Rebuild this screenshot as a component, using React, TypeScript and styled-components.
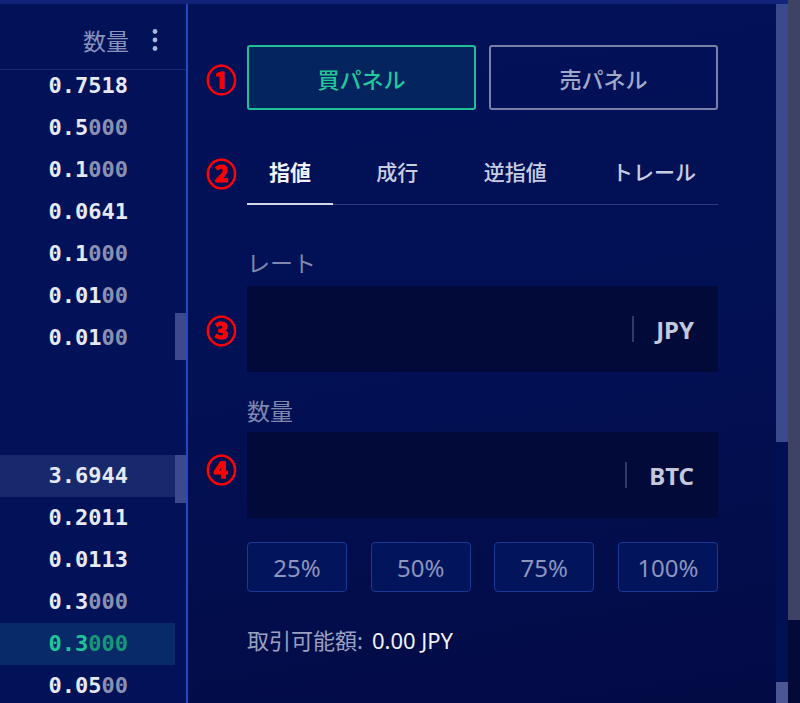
import React from 'react'
import styled, { createGlobalStyle } from 'styled-components';

const jp = `"Noto Sans", "Noto Sans CJK JP", sans-serif`;
const mono = `"DejaVu Sans Mono", "Liberation Mono", monospace`;

type Qty = {
    main : string,
    dim : string,
    tone? : 'plain' | 'hl' | 'green'
}

const asks : Qty[] = [
    { main: '0.7518', dim: '' },
    { main: '0.5', dim: '000' },
    { main: '0.1', dim: '000' },
    { main: '0.0641', dim: '' },
    { main: '0.1', dim: '000' },
    { main: '0.01', dim: '00' },
    { main: '0.01', dim: '00' },
]

const bids : Qty[] = [
    { main: '3.6944', dim: '', tone: 'hl' },
    { main: '0.2011', dim: '' },
    { main: '0.0113', dim: '' },
    { main: '0.3', dim: '000' },
    { main: '0.3', dim: '000', tone: 'green' },
    { main: '0.05', dim: '00' },
]

const GlobalStyle = createGlobalStyle`
    html, body {
        margin : 0;
        padding : 0;
        background : #011052;
        overflow : hidden;
    }
    #root {
        width : 800px;
        height : 703px;
    }
`

const Page = styled.div`
    width : 800px;
    height : 703px;
    display : flex;
    flex-direction : row;
    overflow : hidden;
`

const Body = styled.div`
    flex : 1;
    display : flex;
    flex-direction : column;
    min-width : 0;
`

const TopBar = styled.div`
    height : 4px;
    flex-shrink : 0;
    background : #12237a;
`

const Main = styled.div`
    flex : 1;
    display : flex;
    flex-direction : row;
    min-height : 0;
`

const BookColumn = styled.div`
    width : 186px;
    flex-shrink : 0;
    border-right : 2px solid #2746c2;
    background : #011259;
    display : flex;
    flex-direction : column;
    overflow : hidden;
`

const BookHeader = styled.div`
    height : 59px;
    padding : 6px 28px 0 0;
    border-bottom : 1px solid #1a2a78;
    display : flex;
    flex-direction : row;
    align-items : center;
    justify-content : flex-end;
    gap : 23px;
    flex-shrink : 0;
`

const HeaderLabel = styled.div`
    font-family : ${jp};
    font-size : 23px;
    color : #8a93bc;
`

const Section = styled.div<{ $height? : number }>`
    display : flex;
    flex-direction : row;
    flex-shrink : 0;
    height : ${p => p.$height ? `${p.$height}px` : 'auto'};
    overflow : hidden;
`

const Spread = styled.div`
    height : 91px;
    flex-shrink : 0;
`

const RowList = styled.div`
    width : 175px;
    display : flex;
    flex-direction : column;
`

const Row = styled.div<{ $top? : boolean, $tone : string }>`
    height : 42px;
    flex-shrink : 0;
    box-sizing : border-box;
    display : flex;
    flex-direction : row;
    justify-content : flex-end;
    align-items : ${p => p.$top ? 'flex-start' : 'center'};
    padding : ${p => p.$top ? '5px 47px 0 0' : '0 47px 0 0'};
    font-family : ${mono};
    font-size : 22px;
    font-weight : bold;
    line-height : 22px;
    background : ${p => p.$tone === 'hl' ? '#17286c' : p.$tone === 'green' ? '#082a68' : 'transparent'};
    color : ${p => p.$tone === 'green' ? '#1ec698' : '#e6e9f3'};

    & > span {
        color : ${p => p.$tone === 'green' ? '#17977a' : '#8a90b2'};
    }
`

const ScrollTrack = styled.div`
    width : 11px;
    display : flex;
    flex-direction : column;
`

const Thumb = styled.div<{ $offset : number, $size : number }>`
    margin-top : ${p => p.$offset}px;
    height : ${p => p.$size}px;
    background : #3c4a8c;
`

const OrderPanel = styled.div`
    flex : 1;
    display : flex;
    flex-direction : column;
    background : linear-gradient(170deg, #021259 0%, #021054 50%, #030b45 100%);
`

const Line = styled.div<{ $gap : number }>`
    display : flex;
    flex-direction : row;
    align-items : center;
    margin-top : ${p => p.$gap}px;
`

const Marker = styled.div<{ $lift? : number }>`
    width : 52px;
    padding-left : 7px;
    margin-bottom : ${p => p.$lift ?? 0}px;
    text-align : center;
    font-family : "Noto Sans CJK JP", sans-serif;
    font-size : 30px;
    font-weight : bold;
    line-height : 30px;
    color : #ff0000;
    -webkit-text-stroke : 1.1px #ff0000;
`

const Content = styled.div`
    width : 471px;
`

const PanelSwitch = styled.div`
    display : grid;
    grid-template-columns : 1fr 1fr;
    gap : 13px;
`

const PanelButton = styled.div<{ $active? : boolean }>`
    height : 65px;
    box-sizing : border-box;
    border-radius : 3px;
    border : 2px solid ${p => p.$active ? '#1fc096' : '#7880a8'};
    background : ${p => p.$active ? '#03245f' : 'transparent'};
    color : ${p => p.$active ? '#21c899' : '#a2a9c8'};
    font-family : ${jp};
    font-size : 22px;
    font-weight : 500;
    display : flex;
    align-items : center;
    justify-content : center;
`

const Tabs = styled.div`
    display : flex;
    flex-direction : row;
    justify-content : space-between;
    border-bottom : 1px solid #2d3b7e;
`

const Tab = styled.div<{ $active? : boolean }>`
    height : 65px;
    padding : 0 22px;
    margin-bottom : -1px;
    display : flex;
    align-items : center;
    border-bottom : 2px solid ${p => p.$active ? '#d3d7e8' : 'transparent'};
    font-family : ${jp};
    font-size : 21px;
    font-weight : ${p => p.$active ? 700 : 500};
    color : ${p => p.$active ? '#f2f4fb' : '#c9cde2'};
`

const FieldLabel = styled.div`
    font-family : ${jp};
    font-size : 23px;
    line-height : 28px;
    color : #7e88ae;
`

const Field = styled.div`
    height : 86px;
    background : #020a39;
    display : flex;
    flex-direction : row;
    align-items : center;
    justify-content : flex-end;
    padding-right : 24px;
`

const FieldSep = styled.div`
    width : 2px;
    height : 26px;
    background : #323a6c;
    margin-right : 22px;
`

const Unit = styled.div`
    font-family : ${jp};
    font-size : 24px;
    font-weight : bold;
    color : #c3c8dd;
`

const Percents = styled.div`
    display : flex;
    flex-direction : row;
    justify-content : space-between;
`

const PctButton = styled.div`
    width : 100px;
    height : 50px;
    box-sizing : border-box;
    border : 1.5px solid #1a3894;
    border-radius : 4px;
    background : #02145c;
    display : flex;
    align-items : center;
    justify-content : center;
    font-family : ${jp};
    font-size : 24px;
    color : #8c95bd;
`

const Available = styled.div`
    font-family : ${jp};
    font-size : 22px;
    line-height : 28px;
    color : #9aa1c0;

    & > b {
        font-weight : normal;
        color : #f1f3fb;
        margin-left : 9px;
    }
`

const PanelScroll = styled.div`
    width : 12px;
    display : flex;
    flex-direction : column;
    justify-content : space-between;
`

const PanelThumb = styled.div<{ $size : number, $light? : boolean }>`
    height : ${p => p.$size}px;
    background : ${p => p.$light ? '#4b5792' : '#3b4a8c'};
`

const OuterScroll = styled.div`
    width : 12px;
    flex-shrink : 0;
    display : flex;
    flex-direction : column;
    background : #030a37;
`

const OuterThumb = styled.div`
    height : 620px;
    background : #3e4366;
`

function Kebab() {
    return (
        <svg width="6" height="22" viewBox="0 0 6 22">
            <circle cx="3" cy="2.5" r="2.4" fill="#a9b5da" />
            <circle cx="3" cy="11" r="2.4" fill="#a9b5da" />
            <circle cx="3" cy="19.5" r="2.4" fill="#a9b5da" />
        </svg>
    )
}

function QtyRow({ q, top } : { q : Qty, top? : boolean }) {
    return (
        <Row $top={top} $tone={q.tone ?? 'plain'}>
            {q.main}{q.dim && <span>{q.dim}</span>}
        </Row>
    )
}

export default function App() {
    return (
        <Page>
            <GlobalStyle />
            <Body>
                <TopBar />
                <Main>
                    <BookColumn>
                        <BookHeader>
                            <HeaderLabel>数量</HeaderLabel>
                            <Kebab />
                        </BookHeader>
                        <Section $height={294}>
                            <RowList>
                                {asks.map((q, i) => <QtyRow key={i} q={q} top />)}
                            </RowList>
                            <ScrollTrack>
                                <Thumb $offset={243} $size={47} />
                            </ScrollTrack>
                        </Section>
                        <Spread />
                        <Section>
                            <RowList>
                                {bids.map((q, i) => <QtyRow key={i} q={q} />)}
                            </RowList>
                            <ScrollTrack>
                                <Thumb $offset={0} $size={48} />
                            </ScrollTrack>
                        </Section>
                    </BookColumn>

                    <OrderPanel>
                        <Line $gap={41}>
                            <Marker>①</Marker>
                            <Content>
                                <PanelSwitch>
                                    <PanelButton $active>買パネル</PanelButton>
                                    <PanelButton>売パネル</PanelButton>
                                </PanelSwitch>
                            </Content>
                        </Line>
                        <Line $gap={28}>
                            <Marker>②</Marker>
                            <Content>
                                <Tabs>
                                    <Tab $active>指値</Tab>
                                    <Tab>成行</Tab>
                                    <Tab>逆指値</Tab>
                                    <Tab>トレール</Tab>
                                </Tabs>
                            </Content>
                        </Line>
                        <Line $gap={44}>
                            <Marker />
                            <Content>
                                <FieldLabel>レート</FieldLabel>
                            </Content>
                        </Line>
                        <Line $gap={9}>
                            <Marker>③</Marker>
                            <Content>
                                <Field>
                                    <FieldSep />
                                    <Unit>JPY</Unit>
                                </Field>
                            </Content>
                        </Line>
                        <Line $gap={25}>
                            <Marker />
                            <Content>
                                <FieldLabel>数量</FieldLabel>
                            </Content>
                        </Line>
                        <Line $gap={7}>
                            <Marker $lift={14}>④</Marker>
                            <Content>
                                <Field>
                                    <FieldSep />
                                    <Unit>BTC</Unit>
                                </Field>
                            </Content>
                        </Line>
                        <Line $gap={24}>
                            <Marker />
                            <Content>
                                <Percents>
                                    <PctButton>25%</PctButton>
                                    <PctButton>50%</PctButton>
                                    <PctButton>75%</PctButton>
                                    <PctButton>100%</PctButton>
                                </Percents>
                            </Content>
                        </Line>
                        <Line $gap={34}>
                            <Marker />
                            <Content>
                                <Available>取引可能額:<b>0.00 JPY</b></Available>
                            </Content>
                        </Line>
                    </OrderPanel>

                    <PanelScroll>
                        <PanelThumb $size={438} />
                        <PanelThumb $size={21} $light />
                    </PanelScroll>
                </Main>
            </Body>
            <OuterScroll>
                <OuterThumb />
            </OuterScroll>
        </Page>
    )
}
